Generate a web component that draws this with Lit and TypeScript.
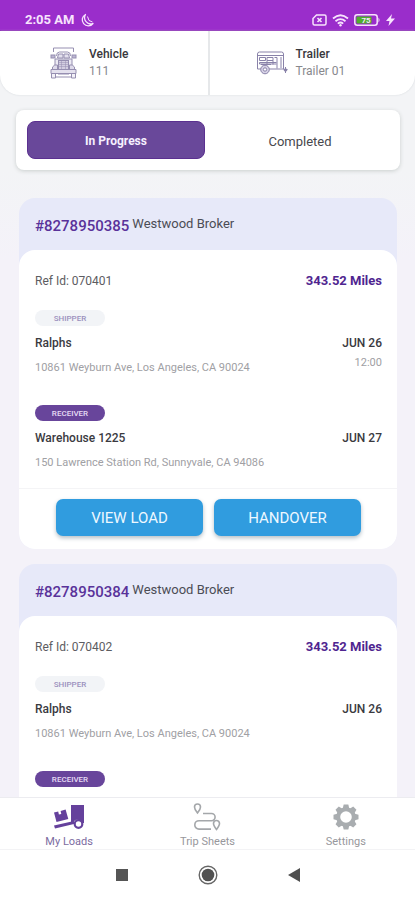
import { LitElement, html, css, svg, nothing } from "lit";
import { customElement, property, state } from "lit/decorators.js";
import { classMap } from "lit/directives/class-map.js";

interface Stop {
  kind: "shipper" | "receiver";
  name: string;
  address: string;
  date: string;
  time?: string;
}

interface Load {
  id: string;
  broker: string;
  ref: string;
  miles: string;
  stops: Stop[];
}

const stops: Stop[] = [
  { kind: "shipper", name: "Ralphs", address: "10861 Weyburn Ave, Los Angeles, CA 90024", date: "JUN 26", time: "12:00" },
  { kind: "receiver", name: "Warehouse 1225", address: "150 Lawrence Station Rd, Sunnyvale, CA 94086", date: "JUN 27" },
];

const loads: Load[] = [
  { id: "#8278950385", broker: "Westwood Broker", ref: "070401", miles: "343.52 Miles", stops },
  {
    id: "#8278950384",
    broker: "Westwood Broker",
    ref: "070402",
    miles: "343.52 Miles",
    stops: [{ ...stops[0], time: undefined }, stops[1]],
  },
];

const gearTeeth = [0, 45, 90, 135, 180, 225, 270, 315];

@customElement("status-bar")
class StatusBar extends LitElement {
  static styles = css`
    :host {
      display: flex;
      align-items: flex-end;
      justify-content: space-between;
      box-sizing: border-box;
      height: 31px;
      padding: 0 20px 2px 25px;
      background: #9a2dcb;
      border-bottom: 1px solid #8313b4;
      color: #f7e3fd;
      flex: none;
    }
    .side {
      display: flex;
      align-items: center;
      height: 16px;
    }
    .time {
      font-size: 13px;
      font-weight: 700;
      line-height: 16px;
      margin-right: 6px;
    }
    .right {
      gap: 5px;
    }
  `;

  render() {
    return html`
      <div class="side">
        <span class="time">2:05 AM</span>
        <svg width="14" height="15" viewBox="0 0 14 15" fill="none" stroke="currentColor" stroke-width="1.300" stroke-linejoin="round">
          <path d="M5.500 1.500A6 6 0 1 0 13 10.500A6.200 6.200 0 0 1 5.500 1.500Z" />
          <path d="M7.500 3.500l1.500 4 3.500 1.500" stroke-width="1" />
        </svg>
      </div>
      <div class="side right">
        <svg width="15" height="12" viewBox="0 0 15 12" fill="none" stroke="currentColor" stroke-width="1.500">
          <path d="M4.500 1h8q1.500 0 1.500 1.500v7q0 1.500-1.500 1.500h-10q-1.500 0-1.500-1.500v-5z" />
          <path d="M5.500 4l4 4M9.500 4l-4 4" stroke-width="1.600" />
        </svg>
        <svg width="17" height="13" viewBox="0 0 17 13" fill="none" stroke="currentColor" stroke-width="1.800">
          <path d="M1 4.500q7.500-6.500 15 0M3.500 7.200q5-4.200 10 0M5.800 9.600q2.700-2.200 5.400 0" />
          <circle cx="8.500" cy="11.300" r="1.200" fill="currentColor" stroke="none" />
        </svg>
        <svg width="27" height="12" viewBox="0 0 27 12">
          <rect x="0.800" y="0.800" width="22.400" height="10.400" rx="2.500" fill="#9a2dcb" stroke="currentColor" stroke-width="1.500" />
          <rect x="2.500" y="2.500" width="15" height="7" rx="1" fill="#4faf2c" />
          <path d="M24.500 3.500q2 2.500 0 5z" fill="currentColor" />
          <text x="12" y="9" text-anchor="middle" font-size="8" font-weight="700" fill="currentColor">75</text>
        </svg>
        <svg width="9" height="12" viewBox="0 0 9 12" fill="currentColor">
          <path d="M6 0L0 7h3.500L2.500 12L9 4.500H5z" />
        </svg>
      </div>
    `;
  }
}

@customElement("unit-bar")
class UnitBar extends LitElement {
  static styles = css`
    :host {
      display: grid;
      grid-template-columns: 1fr 1fr;
      height: 64px;
      flex: none;
      background: #fff;
      border-radius: 0 0 20px 20px;
      box-shadow: 0 0 2px #d3d7db;
    }
    .unit {
      display: flex;
      align-items: center;
      gap: 12px;
      padding-left: 50px;
      font-size: 12px;
      line-height: 17px;
    }
    .unit + .unit {
      padding-left: 46px;
      gap: 8px;
      border-left: 2px solid #e6e8ea;
    }
    .label {
      color: #38383c;
      font-weight: 500;
    }
    .value {
      color: #88888d;
    }
  `;

  render() {
    return html`
      <div class="unit">
        <svg width="27" height="32" viewBox="0 0 27 32" fill="none" stroke="#968fb1" stroke-width="1">
          <path d="M3.500 5v-4h20v4" />
          <path d="M6.500 9q0-4 3-4h8q3 0 3 4" />
          <path d="M7.500 11l1-4h4.500v4zM14 11V7h4.500l1 4z" fill="#e4e1ee" />
          <rect x="1" y="8" width="4" height="3" fill="#bdb6d2" />
          <rect x="22" y="8" width="4" height="3" fill="#bdb6d2" />
          <path d="M5 12h17v8H5z" fill="#eceaf3" />
          <rect x="8.500" y="13.500" width="10" height="9" fill="#d3cee1" />
          <path d="M8.500 15.500h10M8.500 17.500h10M8.500 19.500h10M11.500 13.500v9M15.500 13.500v9" stroke-width=".5" />
          <path d="M2.500 22v-2q2-3 5-2v5h12v-5q3-1 5 2v2" fill="#dedaea" />
          <path d="M1 22.500h25v4H1z" fill="#e4e1ee" />
          <path d="M8 27h11M1.500 27v4h4v-4M21.500 27v4h4v-4M5.500 30h16" fill="#f3f1f8" />
        </svg>
        <div>
          <div class="label">Vehicle</div>
          <div class="value">111</div>
        </div>
      </div>
      <div class="unit">
        <svg width="32" height="24" viewBox="0 0 32 24" fill="none" stroke="#8982a9" stroke-width="1">
          <path d="M1.500 3q0-2 2-2h22q2 0 2 2v15h-15M5 18H1.500V3" />
          <path d="M1.500 4.500h26M3.500 6.500h6v3h-6zM11 6.500h6v3h-6zM18.500 6.500h2.500v11M3.500 11.500h17M25 6v11M3.500 11.500v1.500h17M11 9.500v4M17 9.500v4" />
          <circle cx="9" cy="18.500" r="4.300" fill="#d6d1e5" />
          <circle cx="9" cy="18.500" r="1.700" fill="#fff" />
          <path d="M5 13.500h10M27.500 18.500h4M29.500 16v6" />
          <circle cx="29.500" cy="19" r="1.300" fill="#8982a9" />
        </svg>
        <div>
          <div class="label">Trailer</div>
          <div class="value">Trailer 01</div>
        </div>
      </div>
    `;
  }
}

@customElement("load-card")
class LoadCard extends LitElement {
  @property({ attribute: false }) load!: Load;

  static styles = css`
    :host {
      display: block;
      overflow: hidden;
      border-radius: 16px;
      background: #e7e9f9;
    }
    .head {
      display: flex;
      align-items: center;
      gap: 3px;
      height: 52px;
      padding: 0 16px;
    }
    .id {
      color: #59329a;
      font-size: 15px;
      font-weight: 500;
      line-height: 20px;
      padding-top: 3px;
    }
    .broker {
      color: #4b4c55;
      font-size: 13px;
      line-height: 20px;
    }
    .body {
      background: #fff;
      border-radius: 16px 16px 0 0;
      padding-top: 20px;
    }
    .row {
      display: flex;
      justify-content: space-between;
      line-height: 22px;
      font-size: 12px;
    }
    .summary {
      padding: 0 15px 18px 16px;
      color: #5c5c61;
    }
    .miles {
      color: #4f2590;
      font-weight: 700;
      font-size: 13px;
    }
    .stops {
      display: grid;
      gap: 28px;
      padding: 0 15px 16px 16px;
    }
    .pill {
      width: 70px;
      height: 16px;
      margin-bottom: 6px;
      border-radius: 8px;
      background: #f2f4f7;
      color: #9a90bd;
      font-size: 8px;
      font-weight: 500;
      line-height: 17px;
      text-align: center;
      text-transform: uppercase;
    }
    .pill.receiver {
      background: #68459b;
      color: #e6dcf5;
    }
    .name,
    .date {
      color: #3a3a3f;
      font-weight: 500;
    }
    .detail {
      display: flex;
      justify-content: space-between;
      align-items: flex-start;
      height: 23px;
      color: #a0a0a4;
      font-size: 11px;
      line-height: 17px;
    }
    .address {
      padding-top: 5px;
    }
    .actions {
      display: grid;
      grid-template-columns: 1fr 1fr;
      gap: 11px;
      padding: 10px 36px 13px 37px;
      border-top: 1px solid #f4f4f6;
    }
    .action {
      height: 37px;
      border: 0;
      border-radius: 7px;
      background: #309cdf;
      box-shadow: 0 2px 4px #b4bfc6;
      color: #eef8ff;
      font-family: inherit;
      font-size: 15px;
      font-weight: 400;
      padding: 0;
    }
  `;

  render() {
    const load = this.load;
    return html`
      <div class="head">
        <span class="id">${load.id}</span>
        <span class="broker">${load.broker}</span>
      </div>
      <div class="body">
        <div class="row summary">
          <span>Ref Id: ${load.ref}</span>
          <span class="miles">${load.miles}</span>
        </div>
        <div class="stops">
          ${load.stops.map(
            (stop) => html`
              <div>
                <div class=${classMap({ pill: true, receiver: stop.kind === "receiver" })}>${stop.kind}</div>
                <div class="row">
                  <span class="name">${stop.name}</span>
                  <span class="date">${stop.date}</span>
                </div>
                <div class="detail">
                  <span class="address">${stop.address}</span>
                  ${stop.time ? html`<span>${stop.time}</span>` : nothing}
                </div>
              </div>
            `,
          )}
        </div>
        <div class="actions">
          <button class="action" type="button">VIEW LOAD</button>
          <button class="action" type="button">HANDOVER</button>
        </div>
      </div>
    `;
  }
}

@customElement("bottom-nav")
class BottomNav extends LitElement {
  static styles = css`
    :host {
      display: block;
      flex: none;
      background: #fff;
    }
    .tabs {
      display: grid;
      grid-template-columns: repeat(3, 1fr);
      height: 51px;
      border-top: 1px solid #ececf0;
      border-bottom: 1px solid #f3f3f5;
    }
    .tab {
      display: flex;
      flex-direction: column;
      align-items: center;
      padding-top: 5px;
      color: #97979c;
      font-size: 11px;
      line-height: 14px;
      text-decoration: none;
    }
    .tab svg {
      height: 28px;
      margin-bottom: 4px;
    }
    .tab.current {
      color: #7b6b9f;
    }
    .system {
      display: flex;
      justify-content: center;
      align-items: center;
      gap: 62px;
      height: 50px;
    }
    .key {
      display: grid;
      place-items: center;
      width: 24px;
      height: 24px;
      padding: 0;
      border: 0;
      background: none;
    }
  `;

  render() {
    return html`
      <nav class="tabs">
        <a class="tab current" href="#loads">
          <svg width="32" height="28" viewBox="0 0 32 28" fill="#65419c">
            <path d="M18 2h13v18h-1.500a5 5 0 0 0-9-1l-2.500.5z" />
            <path d="M1 22.500L21 18v3L2 25.500z" />
            <path d="M1 9.500l4.200-1 .7 3 2.400-.6-.7-3 5-1.300L15.300 16 3.500 19z" />
            <circle cx="25.500" cy="21" r="3.800" fill="#fff" stroke="#65419c" stroke-width="2.200" />
          </svg>
          My Loads
        </a>
        <a class="tab" href="#trips">
          <svg width="28" height="28" viewBox="0 0 28 28" fill="none" stroke="#a4a7aa" stroke-width="1.600">
            <path d="M4.500 10Q1.500 6.500 1.500 4a3 3 0 0 1 6 0Q7.500 6.500 4.500 10z" />
            <path d="M23.500 26.500Q20.500 22.500 20.500 20.500a3 3 0 0 1 6 0Q26.500 22.500 23.500 26.500z" />
            <path d="M10 10.500h8.500a3.600 3.600 0 0 1 0 7.200H6a4.200 4.200 0 0 0 0 8.400h12" />
          </svg>
          Trip Sheets
        </a>
        <a class="tab" href="#settings">
          <svg width="26" height="28" viewBox="-13 -14 26 28" fill="#a9adb0">
            ${gearTeeth.map((a) => svg`<path d="M-3.400-8L-2.300-12.500H2.300L3.400-8z" transform="rotate(${a})" />`)}
            <circle r="7.800" fill="none" stroke="#a9adb0" stroke-width="4" />
          </svg>
          Settings
        </a>
      </nav>
      <div class="system">
        <button class="key" type="button" aria-label="Recent apps">
          <svg width="12" height="12"><rect width="12" height="12" fill="#555" /></svg>
        </button>
        <button class="key" type="button" aria-label="Home">
          <svg width="20" height="20" viewBox="-10 -10 20 20">
            <circle r="8.800" fill="none" stroke="#666" stroke-width="1.400" />
            <circle r="6.300" fill="#505050" />
          </svg>
        </button>
        <button class="key" type="button" aria-label="Back">
          <svg width="12" height="14"><path d="M0 7L12 0V14z" fill="#505050" /></svg>
        </button>
      </div>
    `;
  }
}

@customElement("app-root")
class AppRoot extends LitElement {
  @state() private tab = "In Progress";

  static styles = css`
    :host {
      display: flex;
      flex-direction: column;
      height: 100vh;
      overflow: hidden;
      background: linear-gradient(#f3f4f6 170px, #f4f2f9 260px);
      font-family: Roboto, "Liberation Sans", sans-serif;
    }
    .content {
      flex: 1;
      min-height: 0;
      overflow: hidden;
      padding: 15px 15px 0 16px;
    }
    .switch {
      display: grid;
      grid-template-columns: 1fr 1fr;
      gap: 6px;
      padding: 11px;
      margin-bottom: 28px;
      border-radius: 8px;
      background: #fff;
      box-shadow: 0 1px 4px #c9cecd;
    }
    .option {
      height: 38px;
      padding: 2px 0 0;
      border: 0;
      border-radius: 8px;
      background: none;
      color: #48484d;
      font-family: inherit;
      font-size: 13px;
      font-weight: 400;
    }
    .option.on {
      background: #69489a;
      border: 1px solid #5b3090;
      color: #f6f0ff;
      font-size: 12px;
      font-weight: 700;
    }
    .list {
      display: grid;
      gap: 15px;
      margin: 0 3px;
    }
  `;

  render() {
    return html`
      <status-bar></status-bar>
      <unit-bar></unit-bar>
      <main class="content">
        <div class="switch">
          ${["In Progress", "Completed"].map(
            (name) => html`
              <button
                type="button"
                class=${classMap({ option: true, on: this.tab === name })}
                aria-pressed=${this.tab === name}
                @click=${() => (this.tab = name)}
              >
                ${name}
              </button>
            `,
          )}
        </div>
        <div class="list">${loads.map((load) => html`<load-card .load=${load}></load-card>`)}</div>
      </main>
      <bottom-nav></bottom-nav>
    `;
  }
}
